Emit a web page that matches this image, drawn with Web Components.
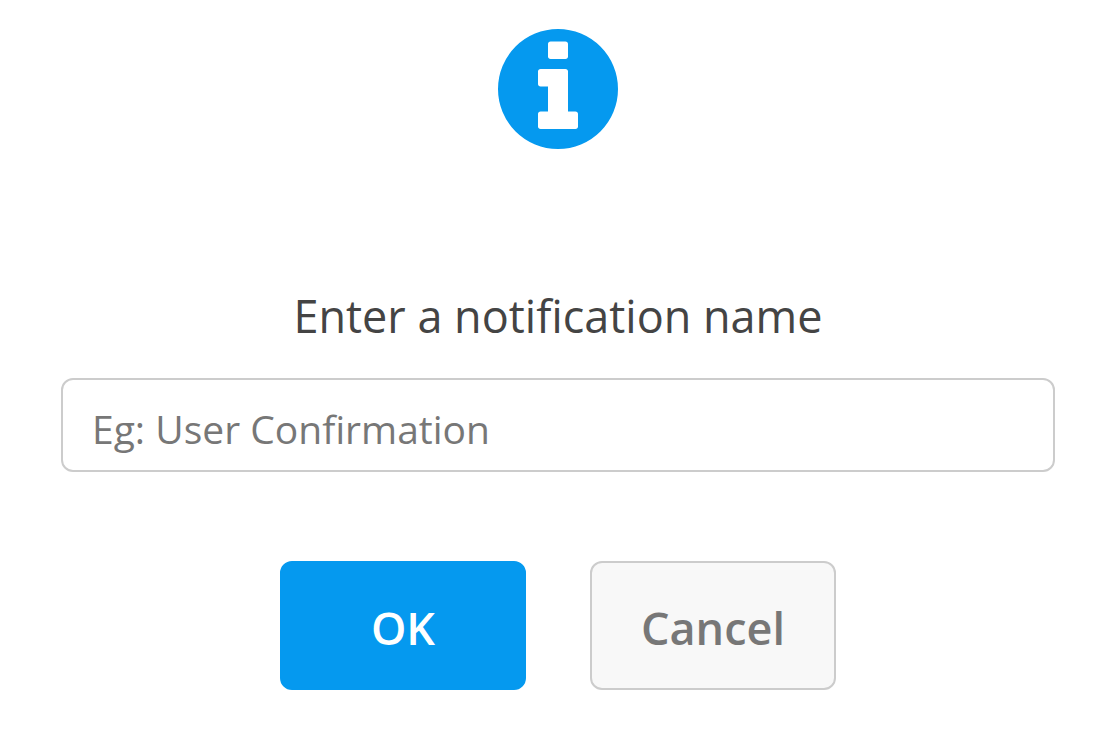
<!DOCTYPE html>
<html lang="en">
<head>
<meta charset="utf-8">
<meta name="viewport" content="width=device-width, initial-scale=1">
<title>Notification name</title>
<style>
body {
  margin: 0;
  background: #ffffff;
  font-family: "Segoe UI", "Open Sans", "Noto Sans", sans-serif;
}
</style>
</head>
<body>
<prompt-dialog label="Enter a notification name" placeholder="Eg: User Confirmation">
  <info-icon slot="icon"></info-icon>
  <dialog-button slot="actions" variant="primary">OK</dialog-button>
  <dialog-button slot="actions">Cancel</dialog-button>
</prompt-dialog>

<script>
/* <info-icon> — filled circle with a slab "i" cut out of it. */
class InfoIcon extends HTMLElement {
  constructor() {
    super();
    this.attachShadow({ mode: 'open' }).innerHTML = `
      <style>
        :host { display: block; width: 120px; height: 120px; color: var(--dialog-accent, #0599ef); }
        svg   { display: block; width: 100%; height: 100%; fill: currentColor; }
      </style>
      <svg viewBox="0 128 1536 1536" aria-hidden="true">
        <path fill-rule="evenodd" d="M1024 1376v-160q0-14-9-23t-23-9h-96v-512q0-14-9-23t-23-9h-320q-14 0-23 9t-9 23v160q0 14 9 23t23 9h96v320h-96q-14 0-23 9t-9 23v160q0 14 9 23t23 9h448q14 0 23-9t9-23z
          M896 480v-160q0-14-9-23t-23-9h-192q-14 0-23 9t-9 23v160q0 14 9 23t23 9h192q14 0 23-9t9-23z
          M1536 896a768 768 0 1 1-1536 0a768 768 0 1 1 1536 0z"/>
      </svg>`;
  }
}

/**
 * <dialog-button> — footer action.
 *
 * Attributes:
 *   variant  "primary" | none (default: neutral)
 */
class DialogButton extends HTMLElement {
  constructor() {
    super();
    this.attachShadow({ mode: 'open' }).innerHTML = `
      <style>
        :host { display: block; }
        button {
          box-sizing: border-box;
          min-width: 246px;
          padding: 34px 40px 30px;
          border: 2px solid #cccccc;
          border-radius: 12px;
          background: #f8f8f8;
          color: #777777;
          font-family: inherit;
          font-size: 45px;
          font-weight: 600;
          line-height: 61px;
          cursor: pointer;
        }
        :host([variant="primary"]) button {
          border-color: var(--dialog-accent, #0599ef);
          background: var(--dialog-accent, #0599ef);
          color: #ffffff;
        }
        button:focus-visible { outline: 2px solid #444444; outline-offset: 2px; }
      </style>
      <button type="button"><slot></slot></button>`;
  }
}

/**
 * <prompt-dialog> — asks for a single line of text.
 *
 * Attributes:
 *   label        text above the field
 *   placeholder  hint inside the field
 *
 * Slots: icon, actions
 */
class PromptDialog extends HTMLElement {
  static get observedAttributes() { return ['label', 'placeholder']; }

  constructor() {
    super();
    this.attachShadow({ mode: 'open' }).innerHTML = `
      <style>
        :host {
          --dialog-accent: #0599ef;
          display: block;
          padding: 29px 61px 55px;
        }
        form {
          display: flex;
          flex-direction: column;
          align-items: center;
          margin: 0;
        }
        label {
          margin: 135px 0 31px;
          color: #444444;
          font-size: 45px;
          line-height: 63px;
          text-align: center;
        }
        input {
          box-sizing: border-box;
          width: 100%;
          padding: 26px 29px 18px;
          border: 2px solid #cccccc;
          border-radius: 12px;
          background: #ffffff;
          color: #444444;
          font-family: inherit;
          font-size: 39px;
          line-height: 46px;
        }
        input::placeholder { color: #777777; opacity: 1; }
        input:focus { outline: none; border-color: var(--dialog-accent); }
        .actions {
          display: flex;
          flex-wrap: wrap;
          justify-content: center;
          gap: 64px;
          margin-top: 89px;
        }
      </style>
      <form role="dialog" aria-labelledby="name-label">
        <slot name="icon"></slot>
        <label id="name-label" for="name"></label>
        <input id="name" type="text" autocomplete="off">
        <div class="actions"><slot name="actions"></slot></div>
      </form>`;
    this.shadowRoot.querySelector('form').addEventListener('submit', (e) => e.preventDefault());
  }

  attributeChangedCallback(name, oldValue, value) {
    if (name === 'label') this.shadowRoot.querySelector('label').textContent = value;
    if (name === 'placeholder') this.shadowRoot.querySelector('input').placeholder = value;
  }
}

customElements.define('info-icon', InfoIcon);
customElements.define('dialog-button', DialogButton);
customElements.define('prompt-dialog', PromptDialog);
</script>
</body>
</html>
